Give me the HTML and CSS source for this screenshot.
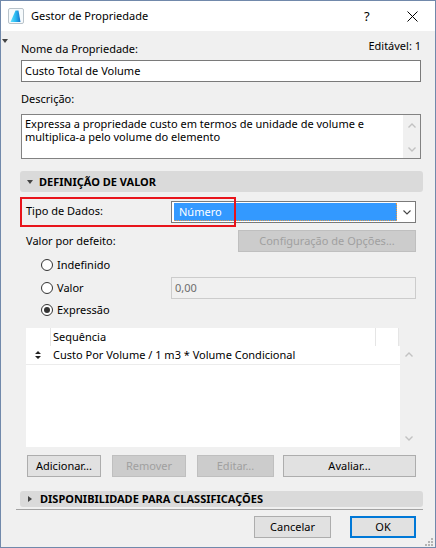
FILE: index.html
```html
<!DOCTYPE html>
<html>
<head>
<meta charset="utf-8">
<link rel="stylesheet" href="styles.css">
</head>
<body>
<div class="window">
  <div class="titlebar">
    <svg class="app-icon" width="16" height="16" viewBox="0 0 16 16">
      <defs>
        <linearGradient id="sail" x1="0" y1="0" x2="1" y2="0">
          <stop offset="0" stop-color="#5fe3ff"/>
          <stop offset="0.55" stop-color="#27b4ee"/>
          <stop offset="1" stop-color="#1670c9"/>
        </linearGradient>
      </defs>
      <rect x="0.5" y="0.5" width="15" height="15" rx="1.5" fill="#f6fafc" stroke="#b9c3ca"/>
      <path d="M2.5 14 L7.5 2.5 L10.5 2.5 L12.5 14 Z" fill="url(#sail)"/>
    </svg>
    <span class="title">Gestor de Propriedade</span>
    <span class="help">?</span>
    <svg class="close" width="11" height="11" viewBox="0 0 11 11">
      <path d="M0.5 0.5 L10.5 10.5 M10.5 0.5 L0.5 10.5" stroke="#000" stroke-width="1"/>
    </svg>
  </div>
  <div class="content">
    <span class="corner-arrow"></span>
    <div class="name-row">
      <span class="label">Nome da Propriedade:</span>
      <span class="editable">Editável: 1</span>
    </div>
    <div class="field name-field">Custo Total de Volume</div>
    <div class="label desc-label">Descrição:</div>
    <div class="textarea">
      <div class="ta-text">Expressa a propriedade custo em termos de unidade de volume e<br>multiplica-a pelo volume do elemento</div>
      <div class="vscroll">
        <svg class="chev" width="8" height="5" viewBox="0 0 8 5"><path d="M0.5 4.5 L4 1 L7.5 4.5" fill="none" stroke="#c2c2c2" stroke-width="1.4"/></svg>
        <svg class="chev" width="8" height="5" viewBox="0 0 8 5"><path d="M0.5 0.5 L4 4 L7.5 0.5" fill="none" stroke="#c2c2c2" stroke-width="1.4"/></svg>
      </div>
    </div>

    <div class="section">
      <span class="tri-down"></span>
      <span>DEFINIÇÃO DE VALOR</span>
    </div>

    <div class="panel">
      <div class="type-row">
        <span class="highlight"></span>
        <span class="label type-label">Tipo de Dados:</span>
        <div class="select">
          <span class="sel-value">Número</span>
          <span class="sel-arrow">
            <svg width="8" height="5" viewBox="0 0 8 5"><path d="M0.5 0.5 L4 4 L7.5 0.5" fill="none" stroke="#444" stroke-width="1.1"/></svg>
          </span>
        </div>
      </div>

      <div class="default-row">
        <span class="label">Valor por defeito:</span>
        <div class="btn disabled config-btn">Configuração de Opções...</div>
      </div>

      <div class="radio-row r1">
        <span class="radio"></span>
        <span class="label">Indefinido</span>
      </div>
      <div class="radio-row r2">
        <span class="radio"></span>
        <span class="label">Valor</span>
        <div class="field disabled-field">0,00</div>
      </div>
      <div class="radio-row r3">
        <span class="radio checked"></span>
        <span class="label">Expressão</span>
      </div>

      <div class="list">
        <div class="list-main">
          <div class="list-head">
            <span class="col-a"></span>
            <span class="col-b">Sequência</span>
            <span class="col-c"></span>
          </div>
          <div class="list-row">
            <span class="row-icon">
              <svg width="6" height="8" viewBox="0 0 6 8"><path d="M0 3 L3 0 L6 3 Z M0 5 L6 5 L3 8 Z" fill="#222"/></svg>
            </span>
            <span class="row-text">Custo Por Volume / 1 m3 * Volume Condicional</span>
          </div>
        </div>
        <div class="list-scroll">
          <svg width="8" height="5" viewBox="0 0 8 5"><path d="M0.5 4.5 L4 1 L7.5 4.5" fill="none" stroke="#c2c2c2" stroke-width="1.4"/></svg>
          <svg width="8" height="5" viewBox="0 0 8 5"><path d="M0.5 0.5 L4 4 L7.5 0.5" fill="none" stroke="#c2c2c2" stroke-width="1.4"/></svg>
        </div>
      </div>

      <div class="btn-row">
        <div class="btn b-add">Adicionar...</div>
        <div class="btn disabled b-remove">Remover</div>
        <div class="btn disabled b-edit">Editar...</div>
        <div class="btn b-eval">Avaliar...</div>
      </div>
    </div>

    <div class="section section-closed">
      <span class="tri-right"></span>
      <span>DISPONIBILIDADE PARA CLASSIFICAÇÕES</span>
    </div>

    <div class="separator"></div>

    <div class="footer">
      <div class="btn b-cancel">Cancelar</div>
      <div class="btn b-ok">OK</div>
    </div>

    <svg class="grip" width="8" height="8" viewBox="0 0 8 8">
      <rect x="6" y="0" width="2" height="2" fill="#b4b4b4"/>
      <rect x="3" y="3" width="2" height="2" fill="#b4b4b4"/>
      <rect x="6" y="3" width="2" height="2" fill="#b4b4b4"/>
      <rect x="0" y="6" width="2" height="2" fill="#b4b4b4"/>
      <rect x="3" y="6" width="2" height="2" fill="#b4b4b4"/>
      <rect x="6" y="6" width="2" height="2" fill="#b4b4b4"/>
    </svg>
  </div>
</div>
</body>
</html>
```

FILE: styles.css
```css
* {
  box-sizing: border-box;
}

html, body {
  margin: 0;
  padding: 0;
}

body {
  width: 436px;
  height: 548px;
  overflow: hidden;
  background: #ffffff;
  font-family: "Noto Sans", "Segoe UI", sans-serif;
  font-size: 11px;
  color: #000;
}

.window {
  width: 436px;
  height: 548px;
  border: 1px solid #7189ab;
  display: flex;
  flex-direction: column;
}

/* Title bar */
.titlebar {
  flex: none;
  height: 30px;
  background: #ffffff;
  display: flex;
  align-items: center;
}

.app-icon {
  flex: none;
  margin-left: 7px;
  margin-top: -1px;
}

.title {
  margin-left: 7px;
  font-size: 11px;
  line-height: 16px;
}

.help {
  margin-left: auto;
  font-size: 13px;
  line-height: 16px;
  width: 8px;
}

.close {
  margin-left: 35px;
  margin-right: 17px;
}

/* Main content */
.content {
  flex: 1;
  position: relative;
  background: #f0f0f0;
  padding: 10px 14px 0 20px;
  display: flex;
  flex-direction: column;
}

.corner-arrow {
  position: absolute;
  left: 1px;
  top: 8px;
  width: 0;
  height: 0;
  border-left: 3px solid transparent;
  border-right: 3px solid transparent;
  border-top: 4px solid #444;
}

.label {
  line-height: 16px;
  white-space: nowrap;
}

.name-row {
  display: flex;
  justify-content: space-between;
  align-items: flex-start;
  height: 16px;
}

.editable {
  line-height: 16px;
  margin-top: -3px;
}

.field {
  height: 22px;
  border: 1px solid #7a7a7a;
  background: #ffffff;
  padding: 2px 3px;
  line-height: 16px;
  white-space: nowrap;
}

.name-field {
  margin-top: 3px;
}

.desc-label {
  margin-top: 9px;
}

.textarea {
  margin-top: 7px;
  height: 45px;
  border: 1px solid #828282;
  background: #ffffff;
  display: flex;
}

.ta-text {
  flex: 1;
  padding: 2px 3px;
  line-height: 13px;
}

.vscroll {
  width: 17px;
  background: #f0f0f0;
  display: flex;
  flex-direction: column;
  justify-content: space-between;
  align-items: center;
  padding: 8px 0 6px;
}

/* Sections */
.section {
  margin-top: 12px;
  margin-left: -1px;
  margin-right: -2px;
  height: 21px;
  background: #dadada;
  border-radius: 3px;
  display: flex;
  align-items: center;
  padding-left: 7px;
  font-weight: bold;
  line-height: 16px;
  white-space: nowrap;
}

.tri-down {
  width: 0;
  height: 0;
  border-left: 3.5px solid transparent;
  border-right: 3.5px solid transparent;
  border-top: 4px solid #444;
  margin-right: 6px;
}

.section-closed {
  margin-top: 14px;
  height: 16px;
  padding-left: 8px;
}

.tri-right {
  width: 0;
  height: 0;
  border-top: 3.5px solid transparent;
  border-bottom: 3.5px solid transparent;
  border-left: 4px solid #444;
  margin-right: 8px;
}

/* Value definition panel */
.panel {
  padding: 0 5px;
  display: flex;
  flex-direction: column;
}

.type-row {
  margin-top: 9px;
  height: 22px;
  display: flex;
  align-items: flex-start;
  position: relative;
}

.type-label {
  padding-top: 2px;
}

.highlight {
  position: absolute;
  left: -6px;
  top: -4px;
  width: 216px;
  height: 30px;
  border: 2px solid #e8141b;
  z-index: 2;
}

.select {
  margin-left: auto;
  width: 245px;
  height: 22px;
  border: 1px solid #7a7a7a;
  background: #ffffff;
  padding: 1px 0 1px 2px;
  display: flex;
}

.sel-value {
  width: 223px;
  height: 18px;
  background: #3399ff;
  color: #ffffff;
  line-height: 17px;
  padding-left: 5px;
  border-right: 1px dotted #e99a45;
  border-bottom: 1px dotted #e99a45;
}

.sel-arrow {
  flex: 1;
  display: flex;
  align-items: center;
  justify-content: center;
  padding-left: 2px;
}

.default-row {
  margin-top: 7px;
  height: 22px;
  display: flex;
  align-items: center;
}

.btn {
  height: 22px;
  border: 1px solid #adadad;
  background: #e1e1e1;
  line-height: 20px;
  text-align: center;
  white-space: nowrap;
  color: #000;
}

.btn.disabled {
  background: #cccccc;
  border-color: #bfbfbf;
  color: #a0a0a0;
}

.config-btn {
  margin-left: auto;
  width: 178px;
}

.radio-row {
  height: 22px;
  display: flex;
  align-items: center;
  padding-left: 15px;
}

.r1 {
  margin-top: 2px;
}

.r2 {
  margin-top: 1px;
}

.radio {
  flex: none;
  width: 12px;
  height: 12px;
  border: 1px solid #333;
  border-radius: 50%;
  background: #ffffff;
  margin-right: 4px;
  display: flex;
  align-items: center;
  justify-content: center;
}

.radio.checked::after {
  content: "";
  width: 6px;
  height: 6px;
  border-radius: 50%;
  background: #333;
}

.disabled-field {
  margin-left: auto;
  width: 245px;
  background: #f0f0f0;
  border-color: #cccccc;
  color: #6d6d6d;
}

/* Expression list */
.list {
  margin-top: 7px;
  width: 391px;
  height: 119px;
  display: flex;
}

.list-main {
  width: 374px;
  background: #ffffff;
}

.list-head {
  height: 18px;
  display: flex;
  background: #f0f0f0;
}

.list-head span {
  background: #ffffff;
  height: 18px;
  line-height: 18px;
}

.col-a {
  width: 25px;
  border-right: 1px solid #e5e5e5;
}

.col-b {
  width: 325px;
  padding-left: 2px;
  border-right: 1px solid #e5e5e5;
}

.col-c {
  width: 23px;
  border-right: 1px solid #e5e5e5;
}

.list-row {
  height: 19px;
  border-bottom: 1px solid #ececec;
  display: flex;
  align-items: center;
}

.row-icon {
  width: 25px;
  padding-left: 9px;
  display: flex;
  align-items: center;
}

.row-text {
  padding-left: 2px;
  line-height: 18px;
  white-space: nowrap;
}

.list-scroll {
  width: 17px;
  padding: 24px 0 6px;
  display: flex;
  flex-direction: column;
  justify-content: space-between;
  align-items: center;
}

.btn-row {
  margin-top: 8px;
  padding-left: 1px;
  display: flex;
}

.b-add {
  width: 74px;
}

.b-remove {
  width: 74px;
  margin-left: 11px;
}

.b-edit {
  width: 77px;
  margin-left: 11px;
}

.b-eval {
  width: 133px;
  margin-left: 9px;
}

/* Footer */
.separator {
  margin-top: 2px;
  margin-left: -5px;
  margin-right: -2px;
  height: 1px;
  background: #a3a3a3;
}

.footer {
  margin-top: 6px;
  padding-right: 5px;
  display: flex;
  justify-content: flex-end;
}

.b-cancel {
  width: 77px;
  margin-right: 19px;
}

.b-ok {
  width: 66px;
  border: 2px solid #0078d7;
  line-height: 18px;
}

.grip {
  position: absolute;
  right: 2px;
  bottom: 1px;
}
```
